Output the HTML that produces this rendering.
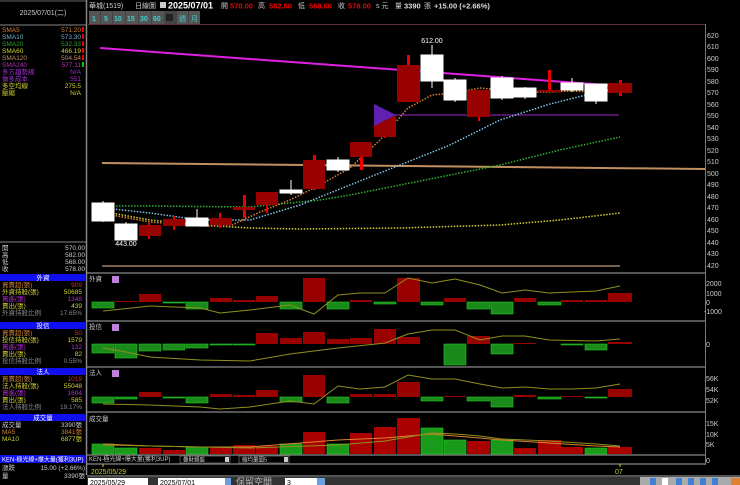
<!DOCTYPE html>
<html><head><meta charset="utf-8"><style>
html,body{margin:0;padding:0;background:#000;width:740px;height:485px;overflow:hidden}
svg{display:block}
text{font-family:"Liberation Sans","Noto Sans CJK TC",sans-serif}
</style></head><body>
<svg width="740" height="485" viewBox="0 0 740 485" xmlns="http://www.w3.org/2000/svg">
<rect width="740" height="485" fill="#000"/>
<!-- left panel -->
<line x1="86.5" y1="0" x2="86.5" y2="475" stroke="#888" stroke-width="1.5"/>
<line x1="0" y1="1" x2="86" y2="1" stroke="#666"/>
<line x1="0" y1="25" x2="86" y2="25" stroke="#888"/>
<text x="43" y="15" font-size="7" fill="#ccc" text-anchor="middle">2025/07/01(二)</text>
<g font-size="6.5">
<text x="2" y="32" fill="#d08030">SMA5</text><text x="81" y="32" fill="#d08030" text-anchor="end">571.20</text>
<text x="2" y="39" fill="#70b0d0">SMA10</text><text x="81" y="39" fill="#70b0d0" text-anchor="end">573.30</text>
<text x="2" y="46" fill="#30a030">SMA20</text><text x="81" y="46" fill="#30a030" text-anchor="end">532.33</text>
<text x="2" y="53" fill="#d0d030">SMA60</text><text x="81" y="53" fill="#d0d030" text-anchor="end">466.19</text>
<text x="2" y="60" fill="#c09060">SMA120</text><text x="81" y="60" fill="#c09060" text-anchor="end">504.54</text>
<text x="2" y="67" fill="#b030b0">SMA240</text><text x="81" y="67" fill="#b030b0" text-anchor="end">577.11</text>
<text x="2" y="74" fill="#a030d0">多方趨勢線</text><text x="81" y="74" fill="#a030d0" text-anchor="end">N/A</text>
<text x="2" y="81" fill="#a030d0">做多成本</text><text x="81" y="81" fill="#a030d0" text-anchor="end">551</text>
<text x="2" y="88" fill="#d0d030">多空均線</text><text x="81" y="88" fill="#d0d030" text-anchor="end">275.5</text>
<text x="2" y="95" fill="#d0d030">壓縮</text><text x="81" y="95" fill="#d0d030" text-anchor="end">N/A</text>
</g>
<g fill="#e00"><rect x="82" y="27" width="2" height="5"/><rect x="82" y="34" width="2" height="5"/><rect x="82" y="41" width="2" height="5"/><rect x="82" y="48" width="2" height="5"/><rect x="82" y="55" width="2" height="5"/></g>
<rect x="82" y="62" width="2" height="5" fill="#0c0"/>
<line x1="0" y1="242" x2="86" y2="242" stroke="#888"/>
<g font-size="6.5" fill="#ccc">
<text x="2" y="250">開</text><text x="85" y="250" text-anchor="end">570.00</text>
<text x="2" y="257">高</text><text x="85" y="257" text-anchor="end">582.00</text>
<text x="2" y="264">低</text><text x="85" y="264" text-anchor="end">568.00</text>
<text x="2" y="271">收</text><text x="85" y="271" text-anchor="end">578.00</text>
</g>
<!-- section blocks -->
<g font-size="6.5">
<rect x="0" y="274" width="85" height="7" fill="#1010ee"/><text x="43" y="280" fill="#fff" text-anchor="middle">外資</text>
<text x="2" y="287" fill="#d08030">買賣超(張)</text><text x="82" y="287" fill="#d03030" text-anchor="end">909</text>
<text x="2" y="294" fill="#d0d030">外資持股(張)</text><text x="82" y="294" fill="#d0d030" text-anchor="end">50685</text>
<text x="2" y="301" fill="#b030d0">買進(張)</text><text x="82" y="301" fill="#b030d0" text-anchor="end">1348</text>
<text x="2" y="308" fill="#d0d030">賣出(張)</text><text x="82" y="308" fill="#d0d030" text-anchor="end">439</text>
<text x="2" y="315" fill="#888">外資持股比例</text><text x="82" y="315" fill="#888" text-anchor="end">17.65%</text>
<rect x="0" y="322" width="85" height="7" fill="#1010ee"/><text x="43" y="328" fill="#fff" text-anchor="middle">投信</text>
<text x="2" y="335" fill="#d08030">買賣超(張)</text><text x="82" y="335" fill="#d03030" text-anchor="end">50</text>
<text x="2" y="342" fill="#d0d030">投信持股(張)</text><text x="82" y="342" fill="#d0d030" text-anchor="end">1579</text>
<text x="2" y="349" fill="#b030d0">買進(張)</text><text x="82" y="349" fill="#b030d0" text-anchor="end">132</text>
<text x="2" y="356" fill="#d0d030">賣出(張)</text><text x="82" y="356" fill="#d0d030" text-anchor="end">82</text>
<text x="2" y="363" fill="#888">投信持股比例</text><text x="82" y="363" fill="#888" text-anchor="end">0.55%</text>
<rect x="0" y="368" width="85" height="7" fill="#1010ee"/><text x="43" y="374" fill="#fff" text-anchor="middle">法人</text>
<text x="2" y="381" fill="#d08030">買賣超(張)</text><text x="82" y="381" fill="#d03030" text-anchor="end">1019</text>
<text x="2" y="388" fill="#d0d030">法人持股(張)</text><text x="82" y="388" fill="#d0d030" text-anchor="end">55048</text>
<text x="2" y="395" fill="#b030d0">買進(張)</text><text x="82" y="395" fill="#b030d0" text-anchor="end">1604</text>
<text x="2" y="402" fill="#d0d030">賣出(張)</text><text x="82" y="402" fill="#d0d030" text-anchor="end">585</text>
<text x="2" y="409" fill="#888">法人持股比例</text><text x="82" y="409" fill="#888" text-anchor="end">19.17%</text>
<rect x="0" y="414" width="85" height="7" fill="#1010ee"/><text x="43" y="420" fill="#fff" text-anchor="middle">成交量</text>
<text x="2" y="427" fill="#ccc">成交量</text><text x="82" y="427" fill="#ccc" text-anchor="end">3390張</text>
<text x="2" y="434" fill="#d08030">MA5</text><text x="82" y="434" fill="#d08030" text-anchor="end">3841張</text>
<text x="2" y="441" fill="#d0d030">MA10</text><text x="82" y="441" fill="#d0d030" text-anchor="end">6877張</text>
<rect x="0" y="455" width="85" height="8" fill="#1010ee"/><text x="2" y="461.5" fill="#fff" font-size="6">KEN-極光線+爆大量(獲利3UP)</text>
<text x="2" y="470" fill="#ccc">漲跌</text><text x="85" y="470" fill="#ccc" text-anchor="end">15.00 (+2.66%)</text>
<text x="2" y="478" fill="#ccc">量</text><text x="85" y="478" fill="#ccc" text-anchor="end">3390張</text>
</g>
<!-- top header -->
<g font-size="7.5" font-weight="bold">
<text x="89" y="8" fill="#ccc" font-weight="normal" font-size="7">華城(1519)</text>
<text x="135" y="8" fill="#ccc" font-weight="normal" font-size="7">日線圖</text>
<rect x="160" y="2" width="6" height="6" fill="#ccc"/>
<text x="168" y="8.5" fill="#fff" font-size="9">2025/07/01</text>
<text x="221" y="8" fill="#ccc" font-size="7" font-weight="normal">開</text><text x="230" y="8.5" fill="#e00">570.00</text>
<text x="258" y="8" fill="#ccc" font-size="7" font-weight="normal">高</text><text x="269" y="8.5" fill="#e00">582.00</text>
<text x="298" y="8" fill="#ccc" font-size="7" font-weight="normal">低</text><text x="309" y="8.5" fill="#e00">568.00</text>
<text x="338" y="8" fill="#ccc" font-size="7" font-weight="normal">收</text><text x="348" y="8.5" fill="#e00">578.00</text>
<text x="376" y="8" fill="#ccc" font-size="7" font-weight="normal">s 元</text>
<text x="395" y="8" fill="#ccc" font-size="7" font-weight="normal">量</text><text x="404" y="8.5" fill="#ddd">3390</text><text x="424" y="8" fill="#ccc" font-size="7" font-weight="normal">張</text>
<text x="434" y="8.5" fill="#ddd">+15.00 (+2.66%)</text>
</g>
<g font-size="7" font-weight="bold" fill="#4cc">
<rect x="89" y="11" width="111" height="13" fill="#444"/>
<rect x="89" y="11" width="11" height="13" fill="#555"/><text x="92" y="21">1</text>
<rect x="101" y="11" width="11" height="13" fill="#555"/><text x="104" y="21">5</text>
<rect x="113" y="11" width="12" height="13" fill="#555"/><text x="114" y="21">10</text>
<rect x="126" y="11" width="12" height="13" fill="#555"/><text x="127" y="21">15</text>
<rect x="139" y="11" width="12" height="13" fill="#555"/><text x="140" y="21">30</text>
<rect x="152" y="11" width="12" height="13" fill="#555"/><text x="153" y="21">60</text>
<rect x="166" y="14" width="7" height="7" fill="#222"/>
<rect x="177" y="11" width="11" height="13" fill="#555"/><text x="179" y="21" font-weight="normal">週</text>
<rect x="189" y="11" width="11" height="13" fill="#555"/><text x="191" y="21" font-weight="normal">月</text>
</g>
<!-- frame -->
<line x1="88" y1="24.5" x2="705" y2="24.5" stroke="#603040"/>
<line x1="705.5" y1="24" x2="705.5" y2="465" stroke="#777"/>
<g stroke="#888" stroke-width="1.2">
<line x1="87" y1="273" x2="705" y2="273"/><line x1="87" y1="321" x2="705" y2="321"/>
<line x1="87" y1="367" x2="705" y2="367"/><line x1="87" y1="412" x2="705" y2="412"/>
<line x1="87" y1="455" x2="705" y2="455"/><line x1="87" y1="464" x2="705" y2="464"/>
<line x1="87" y1="476" x2="740" y2="476"/>
</g>
<!-- price axis -->
<g font-size="7" fill="#ccc">
<text x="707" y="38">620</text><text x="707" y="49">610</text><text x="707" y="61">600</text><text x="707" y="72">590</text><text x="707" y="84">580</text><text x="707" y="95">570</text><text x="707" y="107">560</text><text x="707" y="118">550</text><text x="707" y="130">540</text><text x="707" y="141">530</text><text x="707" y="153">520</text><text x="707" y="164">510</text><text x="707" y="176">500</text><text x="707" y="187">490</text><text x="707" y="199">480</text><text x="707" y="210">470</text><text x="707" y="222">460</text><text x="707" y="233">450</text><text x="707" y="245">440</text><text x="707" y="256">430</text><text x="707" y="268">420</text>
<text x="706" y="286">2000</text><text x="706" y="296">1000</text><text x="706" y="305">0</text><text x="704" y="314">-1000</text>
<text x="706" y="347">0</text>
<text x="706" y="381">56K</text><text x="706" y="392">54K</text><text x="706" y="403">52K</text>
<text x="706" y="426">15K</text><text x="706" y="437">10K</text><text x="706" y="447">5K</text>
<text x="706" y="463">0</text>
</g>
<!-- main chart lines -->
<line x1="100" y1="48" x2="620" y2="86" stroke="#e020e0" stroke-width="2"/>
<line x1="102" y1="163" x2="705" y2="169" stroke="#c09060" stroke-width="2"/>
<line x1="385" y1="115" x2="619" y2="115" stroke="#8020a0" stroke-width="1.2"/>
<line x1="102" y1="266" x2="620" y2="266" stroke="#a08060" stroke-width="1.5"/>
<g fill="none" stroke-width="1.5" stroke-dasharray="1.5,1.5">
<polyline stroke="#d0d030" points="95,210 150,220 200,225 250,228 300,229 400,228 500,225 560,220 620,213"/>
<polyline stroke="#30b030" points="95,206 150,206 250,207 320,200 350,195 400,185 450,175 500,165 560,150 620,137"/>
<polyline stroke="#80c0e0" points="95,207 150,213 200,220 250,220 300,205 350,185 400,165 450,145 500,120 550,104 590,94 620,88"/>
<polyline stroke="#e08030" points="95,212 150,222 200,226 230,226 260,212 290,200 320,185 350,168 380,140 408,108 432,95 455,93 480,88 502,90 525,92 549,92 572,91 596,92 620,89"/>
</g>
<!-- candles -->
<g>
<g fill="#fff" stroke="#fff">
<line x1="103" y1="201" x2="103" y2="222"/><rect x="92" y="203" width="22" height="18"/>
<line x1="126" y1="222" x2="126" y2="240"/><rect x="115" y="224" width="22" height="16"/>
<line x1="197" y1="209" x2="197" y2="226"/><rect x="186" y="218" width="22" height="8"/>
<line x1="291" y1="180" x2="291" y2="195"/><rect x="280" y="190" width="22" height="3"/>
<line x1="338" y1="157" x2="338" y2="172"/><rect x="327" y="160" width="22" height="10"/>
<line x1="432" y1="45" x2="432" y2="88"/><rect x="421" y="55" width="22" height="26"/>
<line x1="455" y1="78" x2="455" y2="102"/><rect x="444" y="80" width="22" height="20"/>
<line x1="502" y1="76" x2="502" y2="100"/><rect x="491" y="78" width="22" height="20"/>
<line x1="525" y1="87" x2="525" y2="99"/><rect x="514" y="88" width="22" height="9"/>
<line x1="572" y1="78" x2="572" y2="92"/><rect x="561" y="83" width="22" height="7"/>
<line x1="596" y1="84" x2="596" y2="104"/><rect x="585" y="84" width="22" height="17"/>
</g>
<g fill="#e00">
<rect x="148" y="223" width="2" height="16"/><rect x="173" y="216" width="2" height="14"/><rect x="219" y="213" width="2" height="15"/><rect x="243" y="195" width="3" height="23"/><rect x="266" y="205" width="2" height="8"/><rect x="313" y="155" width="3" height="35"/><rect x="360" y="157" width="3" height="13"/><rect x="407" y="55" width="3" height="12"/><rect x="478" y="115" width="2" height="6"/><rect x="548" y="70" width="3" height="22"/><rect x="619" y="80" width="3" height="16"/><rect x="384" y="133" width="2" height="5"/>
</g>
<g fill="#900">
<rect x="139" y="225" width="22" height="11"/>
<rect x="163" y="219" width="22" height="7"/>
<rect x="210" y="218" width="22" height="7"/>
<rect x="233" y="207" width="22" height="3"/>
<rect x="256" y="192" width="22" height="13"/>
<rect x="303" y="160" width="22" height="29"/>
<rect x="350" y="142" width="22" height="15"/>
<rect x="374" y="115" width="22" height="22"/>
<rect x="397" y="65" width="23" height="37"/>
<rect x="467" y="90" width="23" height="27"/>
<rect x="538" y="90" width="23" height="2"/>
<rect x="608" y="83" width="24" height="10"/>
</g>
<polygon points="374,104 396,115 374,126" fill="#6020b0"/>
<text x="432" y="43" font-size="7" fill="#fff" text-anchor="middle">612.00</text>
<text x="126" y="246" font-size="7" fill="#fff" text-anchor="middle">443.00</text>
</g>
<!-- sub panel labels -->
<g font-size="6.5" fill="#ccc">
<text x="89" y="281">外資</text><rect x="112" y="276" width="7" height="7" fill="#c080e0"/>
<text x="89" y="329">投信</text><rect x="112" y="324" width="7" height="7" fill="#c080e0"/>
<text x="89" y="375">法人</text><rect x="112" y="370" width="7" height="7" fill="#c080e0"/>
<text x="89" y="421">成交量</text>
</g>
<!-- 外資 bars zero 302 -->
<g fill="#1a8a1a" stroke="#2c2" stroke-width="0.6">
<rect x="92" y="302" width="22" height="6"/><rect x="163" y="302" width="22" height="1"/><rect x="186" y="302" width="22" height="7"/><rect x="280" y="302" width="22" height="7"/><rect x="327" y="302" width="22" height="7"/><rect x="374" y="302" width="22" height="2"/><rect x="421" y="302" width="22" height="3"/><rect x="467" y="302" width="23" height="7"/><rect x="491" y="302" width="22" height="12"/><rect x="538" y="302" width="23" height="3"/>
</g>
<g fill="#900">
<rect x="115" y="301" width="22" height="1"/><rect x="139" y="294" width="22" height="8"/><rect x="210" y="298" width="22" height="4"/><rect x="233" y="300" width="22" height="2"/><rect x="256" y="296" width="22" height="6"/><rect x="303" y="278" width="22" height="24"/><rect x="350" y="300" width="22" height="2"/><rect x="397" y="278" width="23" height="24"/><rect x="444" y="298" width="22" height="4"/><rect x="514" y="298" width="22" height="4"/><rect x="561" y="300" width="22" height="2"/><rect x="585" y="300" width="22" height="2"/><rect x="608" y="293" width="24" height="9"/>
</g>
<polyline fill="none" stroke="#909020" stroke-width="1" points="103,311 150,306 200,308 220,313 250,310 290,305 314,314 338,295 360,293 385,293 408,278 432,283 455,279 480,285 502,293 525,290 549,293 572,292 596,291 620,286"/>
<!-- 投信 zero 344 -->
<g fill="#1a8a1a" stroke="#2c2" stroke-width="0.6">
<rect x="92" y="344" width="22" height="9"/><rect x="115" y="344" width="22" height="14"/><rect x="139" y="344" width="22" height="7"/><rect x="163" y="344" width="22" height="6"/><rect x="186" y="344" width="22" height="4"/><rect x="210" y="344" width="22" height="1"/><rect x="233" y="344" width="22" height="1"/><rect x="444" y="344" width="22" height="21"/><rect x="491" y="344" width="22" height="10"/><rect x="561" y="344" width="22" height="1"/><rect x="585" y="344" width="22" height="6"/>
</g>
<g fill="#900">
<rect x="256" y="333" width="22" height="11"/><rect x="280" y="338" width="22" height="6"/><rect x="303" y="332" width="22" height="12"/><rect x="327" y="339" width="22" height="5"/><rect x="350" y="338" width="22" height="6"/><rect x="374" y="329" width="22" height="15"/><rect x="397" y="337" width="23" height="7"/><rect x="467" y="336" width="23" height="8"/><rect x="514" y="343" width="22" height="1"/><rect x="608" y="342" width="24" height="2"/>
</g>
<polyline fill="none" stroke="#909020" stroke-width="1" points="103,348 126,352 150,357 200,360 250,361 290,354 338,348 385,343 408,334 432,330 455,330 480,340 502,336 525,336 549,340 596,341 620,339"/>
<!-- 法人 zero 397 -->
<g fill="#1a8a1a" stroke="#2c2" stroke-width="0.6">
<rect x="92" y="397" width="22" height="6"/><rect x="115" y="397" width="22" height="2"/><rect x="163" y="397" width="22" height="1"/><rect x="186" y="397" width="22" height="6"/><rect x="280" y="397" width="22" height="5"/><rect x="327" y="397" width="22" height="6"/><rect x="421" y="397" width="22" height="4"/><rect x="467" y="397" width="23" height="4"/><rect x="491" y="397" width="22" height="10"/><rect x="538" y="397" width="23" height="2"/><rect x="585" y="397" width="22" height="1"/>
</g>
<g fill="#900">
<rect x="139" y="392" width="22" height="5"/><rect x="210" y="394" width="22" height="3"/><rect x="233" y="395" width="22" height="2"/><rect x="256" y="390" width="22" height="7"/><rect x="303" y="375" width="22" height="22"/><rect x="350" y="394" width="22" height="3"/><rect x="374" y="394" width="22" height="3"/><rect x="397" y="382" width="23" height="15"/><rect x="444" y="396" width="22" height="1"/><rect x="514" y="395" width="22" height="2"/><rect x="561" y="396" width="22" height="1"/><rect x="608" y="389" width="24" height="8"/>
</g>
<polyline fill="none" stroke="#909020" stroke-width="1" points="103,404 150,405 200,407 220,409 250,407 290,401 314,404 338,386 360,389 385,387 408,375 432,379 455,379 480,384 502,388 525,387 549,389 572,389 596,388 620,384"/>
<!-- volume base 454 -->
<g fill="#1a9a1a" stroke="#2c2" stroke-width="0.6">
<rect x="92" y="444" width="22" height="10"/><rect x="115" y="448" width="22" height="6"/><rect x="186" y="447" width="22" height="7"/><rect x="280" y="444" width="22" height="10"/><rect x="327" y="444" width="22" height="10"/><rect x="421" y="428" width="22" height="26"/><rect x="444" y="440" width="22" height="14"/><rect x="491" y="440" width="22" height="14"/><rect x="585" y="448" width="22" height="6"/>
</g>
<g fill="#a00">
<rect x="139" y="448" width="22" height="6"/><rect x="163" y="450" width="22" height="4"/><rect x="210" y="447" width="22" height="7"/><rect x="233" y="445" width="22" height="9"/><rect x="256" y="446" width="22" height="8"/><rect x="303" y="432" width="22" height="22"/><rect x="350" y="433" width="22" height="21"/><rect x="374" y="427" width="22" height="27"/><rect x="397" y="418" width="23" height="36"/><rect x="467" y="441" width="23" height="13"/><rect x="514" y="448" width="22" height="6"/><rect x="538" y="440" width="23" height="14"/><rect x="561" y="447" width="22" height="7"/><rect x="608" y="447" width="24" height="7"/>
</g>
<polyline fill="none" stroke="#e08030" stroke-width="1" points="103,444 150,446 200,447 250,447 300,443 338,440 385,438 408,436 432,434 455,436 480,438 502,440 549,443 596,446 620,447"/>
<polyline fill="none" stroke="#909020" stroke-width="1" points="103,445 150,446 250,448 338,445 385,441 408,437 432,433 455,434 480,436 502,439 549,441 596,444 620,446"/>
<!-- bottom row -->
<text x="89" y="461" font-size="6" fill="#ccc">KEN-極光線+爆大量(獲利3UP)</text>
<rect x="180" y="456" width="50" height="7" fill="#000" stroke="#888" stroke-width="0.6"/><text x="183" y="461.5" font-size="5.5" fill="#ccc">疊財類盤</text><rect x="225" y="457" width="4" height="5" fill="#ccc"/>
<rect x="239" y="456" width="50" height="7" fill="#000" stroke="#888" stroke-width="0.6"/><text x="242" y="461.5" font-size="5.5" fill="#ccc">縮均量圖5</text><rect x="284" y="457" width="4" height="5" fill="#ccc"/>
<line x1="103" y1="464" x2="103" y2="467" stroke="#cc3"/><line x1="620" y1="464" x2="620" y2="467" stroke="#cc3"/>
<text x="91" y="474" font-size="7" fill="#cc3">2025/05/29</text>
<text x="615" y="474" font-size="7" fill="#cc3">07</text>
<rect x="87" y="477" width="653" height="8" fill="#333"/>
<rect x="88" y="478" width="60" height="7" fill="#fff"/><text x="90" y="485" font-size="7" fill="#000">2025/05/29</text>
<rect x="158" y="478" width="67" height="7" fill="#fff"/><text x="160" y="485" font-size="7" fill="#000">2025/07/01</text>
<rect x="225" y="478" width="6" height="7" fill="#6aa0e0"/>
<text x="236" y="485" font-size="9" fill="#bbb">保留空間</text>
<rect x="285" y="478" width="40" height="7" fill="#fff"/><text x="287" y="485" font-size="7" fill="#000">3</text>
<rect x="317" y="478" width="8" height="7" fill="#6aa0e0"/>
<rect x="640" y="477" width="100" height="8" fill="#aaa"/>
<g fill="#4080d0"><rect x="650" y="478" width="6" height="7"/><rect x="676" y="478" width="6" height="7"/><rect x="688" y="478" width="6" height="7"/><rect x="700" y="478" width="6" height="7"/><rect x="712" y="478" width="6" height="7"/></g>
<rect x="662" y="478" width="6" height="7" fill="#fff"/><rect x="731" y="478" width="9" height="7" fill="#e08030"/>
</svg>
</body></html>
